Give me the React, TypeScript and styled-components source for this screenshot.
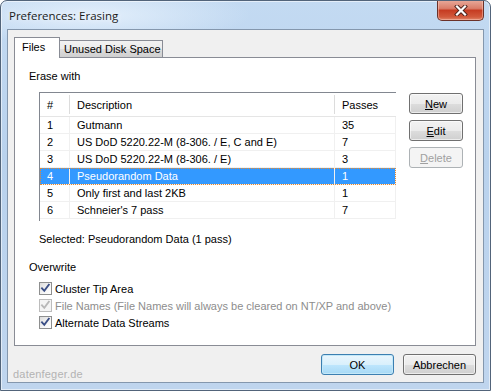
import styled, { createGlobalStyle } from 'styled-components';

const GlobalStyle = createGlobalStyle`
  html, body {
    margin: 0;
    padding: 0;
    background: #ffffff;
  }
  body {
    font-family: "Liberation Sans", Arial, sans-serif;
    font-size: 11px;
    color: #000;
  }
`;

type Method = { id: string; name: string; passes: string };

const methods: Method[] = [
  { id: '1', name: 'Gutmann', passes: '35' },
  { id: '2', name: 'US DoD 5220.22-M (8-306. / E, C and E)', passes: '7' },
  { id: '3', name: 'US DoD 5220.22-M (8-306. / E)', passes: '3' },
  { id: '4', name: 'Pseudorandom Data', passes: '1' },
  { id: '5', name: 'Only first and last 2KB', passes: '1' },
  { id: '6', name: "Schneier's 7 pass", passes: '7' },
];

const selectedId = '4';

const Window = styled.div`
  box-sizing: border-box;
  width: 491px;
  height: 391px;
  display: flex;
  flex-direction: column;
  padding: 0 6px 7px 6px;
  border: 1px solid #52647a;
  border-radius: 7px 7px 0 0;
  background:
    radial-gradient(ellipse 160px 30px at 90px 14px, rgba(230, 241, 252, 0.9), rgba(230, 241, 252, 0) 100%),
    linear-gradient(to bottom, #c3daf2 0%, #b9d2ed 40%, #bfd5ee 100%);
  box-shadow: inset 0 0 0 1px rgba(255, 255, 255, 0.55);
  overflow: hidden;
`;

const TitleBar = styled.div`
  height: 28px;
  display: flex;
  align-items: center;
  padding-left: 2px;
`;

const Title = styled.span`
  font-family: "Open Sans", "Noto Sans", sans-serif;
  font-size: 11.5px;
  color: #1b1b1b;
  text-shadow: 0 0 6px rgba(255, 255, 255, 0.9);
`;

const CloseButton = styled.div`
  box-sizing: border-box;
  margin-left: auto;
  align-self: flex-start;
  margin-top: -1px;
  width: 47px;
  height: 21px;
  border: 1px solid #6b3129;
  border-top: none;
  border-radius: 0 0 5px 5px;
  background: linear-gradient(to bottom, #e9ab9c 0%, #da7d69 42%, #c63c22 52%, #d25a3c 85%, #e0876b 100%);
  box-shadow: inset 0 0 0 1px rgba(255, 210, 200, 0.45);
  display: flex;
  align-items: center;
  justify-content: center;
`;

const Client = styled.div`
  flex: 1;
  display: flex;
  flex-direction: column;
  padding: 7px 7px 0 6px;
  border: 1px solid #8497ad;
  background: #f0f0f0;
`;

const TabStrip = styled.div`
  display: flex;
  align-items: flex-end;
  position: relative;
  z-index: 1;
`;

const Tab = styled.div<{ $active?: boolean }>`
  box-sizing: border-box;
  display: flex;
  align-items: center;
  border: 1px solid #898c95;
  border-bottom: none;
  ${(p) =>
    p.$active
      ? `
    width: 46px;
    height: 21px;
    margin-bottom: -1px;
    padding: 0 0 3px 7px;
    background: #ffffff;
  `
      : `
    width: 103px;
    height: 17px;
    border-left: none;
    padding: 0 0 0 4px;
    background: linear-gradient(to bottom, #f2f2f2 0%, #ebebeb 50%, #dddddd 51%, #cfcfcf 100%);
  `}
`;

const Panel = styled.div`
  box-sizing: border-box;
  height: 289px;
  border: 1px solid #898c95;
  background: #ffffff;
  padding: 12px 0 0 14px;
  display: flex;
  flex-direction: column;
`;

const Label = styled.div`
  line-height: 13px;
`;

const Indented = styled.div<{ $top: number }>`
  margin: ${(p) => p.$top}px 0 0 10px;
`;

const ListRow = styled.div`
  display: flex;
  align-items: flex-start;
  margin: 9px 0 0 10px;
`;

const ListView = styled.div`
  box-sizing: border-box;
  width: 357px;
  height: 129px;
  border-top: 1px solid #828790;
  border-left: 1px solid #828790;
  overflow: hidden;
`;

const GridRow = styled.div<{ $selected?: boolean }>`
  display: grid;
  grid-template-columns: 30px 265px 1fr;
  height: 17px;
  box-sizing: border-box;
  border-bottom: 1px solid #f0f0f0;
  background: ${(p) => (p.$selected ? '#3399ff' : 'transparent')};
  color: ${(p) => (p.$selected ? '#ffffff' : '#000000')};
  ${(p) => (p.$selected ? 'outline: 1px dotted #e8892c; outline-offset: -1px;' : '')}
`;

const Cell = styled.div`
  box-sizing: border-box;
  display: flex;
  align-items: center;
  padding-left: 7px;
  border-right: 1px solid #f0f0f0;
  white-space: nowrap;
  overflow: hidden;
`;

const HeaderRow = styled.div`
  display: grid;
  grid-template-columns: 30px 265px 1fr;
  height: 24px;
  box-sizing: border-box;
  border-bottom: 1px solid #e5e5e5;
`;

const HeaderCell = styled.div<{ $sep?: boolean }>`
  display: flex;
  align-items: center;
  padding-left: 7px;
  position: relative;
  &::after {
    content: '';
    display: ${(p) => (p.$sep ? 'block' : 'none')};
    position: absolute;
    right: 0;
    top: 2px;
    bottom: 2px;
    width: 1px;
    background: #dcdcdc;
  }
`;

const ButtonColumn = styled.div`
  display: flex;
  flex-direction: column;
  gap: 6px;
  margin: 1px 0 0 13px;
`;

const PushButton = styled.button<{ $default?: boolean; $wide?: boolean }>`
  box-sizing: border-box;
  width: ${(p) => (p.$wide ? '73px' : '54px')};
  height: 21px;
  padding: 0;
  border: 1px solid ${(p) => (p.$default ? '#3c7fb1' : '#707070')};
  border-radius: 3px;
  background: ${(p) =>
    p.$default
      ? 'linear-gradient(to bottom, #eaf6fd 0%, #d9f0fc 50%, #bee6fd 51%, #a7d9f5 100%)'
      : 'linear-gradient(to bottom, #f2f2f2 0%, #ebebeb 50%, #dddddd 51%, #cfcfcf 100%)'};
  box-shadow: ${(p) => (p.$default ? 'inset 0 0 0 1px #c4e8f8' : 'inset 0 0 0 1px rgba(255,255,255,0.6)')};
  font-family: "Liberation Sans", Arial, sans-serif;
  font-size: 11px;
  color: #000;
  &:disabled {
    border-color: #adb2b5;
    background: #f4f4f4;
    box-shadow: none;
    color: #a0a0a0;
  }
`;

const CheckList = styled.div`
  display: flex;
  flex-direction: column;
  margin: 6px 0 0 10px;
`;

const CheckRow = styled.label<{ $disabled?: boolean }>`
  display: flex;
  align-items: center;
  gap: 3px;
  height: 17px;
  color: ${(p) => (p.$disabled ? '#8d8d8d' : '#000')};
`;

const Box = styled.span<{ $disabled?: boolean }>`
  box-sizing: border-box;
  width: 13px;
  height: 13px;
  border: 1px solid ${(p) => (p.$disabled ? '#bcbcbc' : '#8e8f8f')};
  background: ${(p) =>
    p.$disabled ? '#f4f4f4' : 'linear-gradient(135deg, #dcdcdc 0%, #f6f6f6 60%, #ffffff 100%)'};
  display: flex;
  align-items: center;
  justify-content: center;
`;

const Footer = styled.div`
  display: flex;
  align-items: flex-start;
  margin-top: 8px;
  gap: 9px;
`;

const Watermark = styled.span`
  margin: 14px auto 0 -1px;
  color: #b3b3b3;
  letter-spacing: 0.2px;
`;

const Check = ({ disabled }: { disabled?: boolean }) => (
  <Box $disabled={disabled}>
    <svg width="11" height="11" viewBox="0 0 11 11">
      <path
        d="M2 5.3 L4.3 7.8 L8.8 1.8"
        fill="none"
        stroke={disabled ? '#b8b8b8' : '#3b4f86'}
        strokeWidth="1.9"
        strokeLinecap="square"
      />
    </svg>
  </Box>
);

const App = () => {
  const selected = methods.find((m) => m.id === selectedId);
  return (
    <>
      <GlobalStyle />
      <Window>
        <TitleBar>
          <Title>Preferences: Erasing</Title>
          <CloseButton>
            <svg width="14" height="11" viewBox="0 0 14 11">
              <path d="M3 1.5 L11 9.5 M11 1.5 L3 9.5" stroke="#4a2019" strokeWidth="4" strokeLinecap="square" />
              <path d="M3 1.5 L11 9.5 M11 1.5 L3 9.5" stroke="#ffffff" strokeWidth="2.2" strokeLinecap="square" />
            </svg>
          </CloseButton>
        </TitleBar>
        <Client>
          <TabStrip>
            <Tab $active>Files</Tab>
            <Tab>Unused Disk Space</Tab>
          </TabStrip>
          <Panel>
            <Label>Erase with</Label>
            <ListRow>
              <ListView>
                <HeaderRow>
                  <HeaderCell $sep>#</HeaderCell>
                  <HeaderCell $sep>Description</HeaderCell>
                  <HeaderCell>Passes</HeaderCell>
                </HeaderRow>
                {methods.map((m) => (
                  <GridRow key={m.id} $selected={m.id === selectedId}>
                    <Cell>{m.id}</Cell>
                    <Cell>{m.name}</Cell>
                    <Cell>{m.passes}</Cell>
                  </GridRow>
                ))}
              </ListView>
              <ButtonColumn>
                <PushButton>
                  <u>N</u>ew
                </PushButton>
                <PushButton>
                  <u>E</u>dit
                </PushButton>
                <PushButton disabled>
                  <u>D</u>elete
                </PushButton>
              </ButtonColumn>
            </ListRow>
            <Indented $top={12}>
              <Label>
                Selected: {selected?.name} ({selected?.passes} pass)
              </Label>
            </Indented>
            <Label style={{ marginTop: 15 }}>Overwrite</Label>
            <CheckList>
              <CheckRow>
                <Check />
                Cluster Tip Area
              </CheckRow>
              <CheckRow $disabled>
                <Check disabled />
                File Names (File Names will always be cleared on NT/XP and above)
              </CheckRow>
              <CheckRow>
                <Check />
                Alternate Data Streams
              </CheckRow>
            </CheckList>
          </Panel>
          <Footer>
            <Watermark>datenfeger.de</Watermark>
            <PushButton $default $wide>
              OK
            </PushButton>
            <PushButton $wide>Abbrechen</PushButton>
          </Footer>
        </Client>
      </Window>
    </>
  );
};

export default App;
